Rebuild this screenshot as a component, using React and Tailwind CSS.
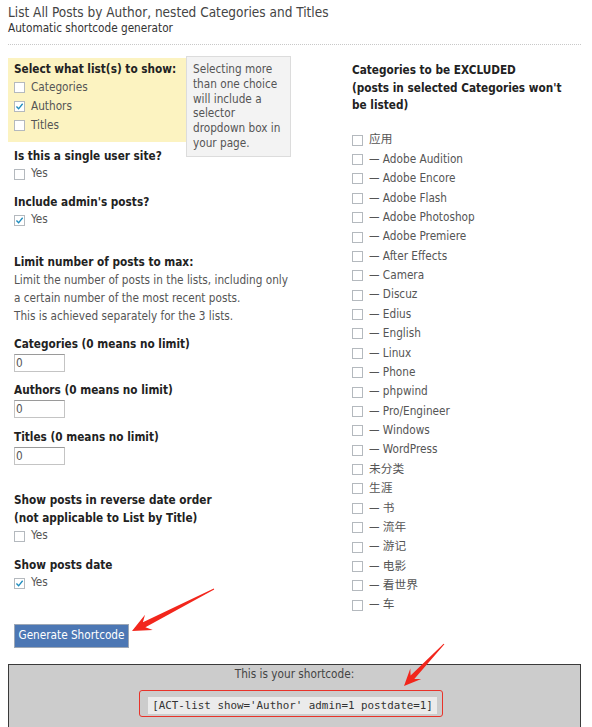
const categories = [
  '应用',
  '— Adobe Audition',
  '— Adobe Encore',
  '— Adobe Flash',
  '— Adobe Photoshop',
  '— Adobe Premiere',
  '— After Effects',
  '— Camera',
  '— Discuz',
  '— Edius',
  '— English',
  '— Linux',
  '— Phone',
  '— phpwind',
  '— Pro/Engineer',
  '— Windows',
  '— WordPress',
  '未分类',
  '生涯',
  '— 书',
  '— 流年',
  '— 游记',
  '— 电影',
  '— 看世界',
  '— 车',
]

function Box({ checked }) {
  return (
    <span className="inline-flex h-[11px] w-[11px] shrink-0 items-center justify-center border border-[#b4b9be] bg-white">
      {checked && (
        <svg viewBox="0 0 10 10" className="h-[9px] w-[9px]">
          <path d="M1.6 5.1 L4 7.6 L8.5 1.9" fill="none" stroke="#1e8cbe" strokeWidth="1.5" />
        </svg>
      )}
    </span>
  )
}

function Check({ label, checked, className = 'h-[19px]' }) {
  return (
    <div className={`flex items-center gap-[6px] ${className}`}>
      <Box checked={checked} />
      <span>{label}</span>
    </div>
  )
}

function NumberField() {
  return (
    <input
      readOnly
      value="0"
      className="mt-[1px] block h-[18px] w-[51px] border border-[#c4c4c4] border-t-[#9a9a9a] bg-white pl-[1px] text-[11.7px] text-[#555] outline-none"
    />
  )
}

// tapered shaft + swept head, pointing from tail to tip
function arrowPoints(tx, ty, hx, hy, headLen, headHalf, tailW, neckW) {
  const dx = hx - tx
  const dy = hy - ty
  const len = Math.sqrt(dx * dx + dy * dy)
  const ux = dx / len
  const uy = dy / len
  const nx = -uy
  const ny = ux
  const bx = hx - ux * headLen
  const by = hy - uy * headLen
  const kx = hx - ux * headLen * 0.72
  const ky = hy - uy * headLen * 0.72
  const pts = [
    [tx + nx * tailW / 2, ty + ny * tailW / 2],
    [kx + nx * neckW / 2, ky + ny * neckW / 2],
    [bx + nx * headHalf, by + ny * headHalf],
    [hx, hy],
    [bx - nx * headHalf, by - ny * headHalf],
    [kx - nx * neckW / 2, ky - ny * neckW / 2],
    [tx - nx * tailW / 2, ty - ny * tailW / 2],
  ]
  return pts.map(p => p.map(v => v.toFixed(1)).join(',')).join(' ')
}

export default function App() {
  return (
    <div className="relative min-h-[727px] bg-white px-2 pt-[3px] font-['DejaVu_Sans_Condensed','Noto_Sans_CJK_SC',sans-serif] text-[11.7px] text-[#555]">
      {/* header */}
      <div className="w-[573px] border-b border-dotted border-[#c8c8c8] pb-[9px] text-[#444]">
        <div className="text-[13.5px] leading-[18px]">List All Posts by Author, nested Categories and Titles</div>
        <div className="leading-[14px] text-[#333]">Automatic shortcode generator</div>
      </div>

      <div className="flex">
        {/* left column */}
        <div className="w-[283px] pt-[13px]">
          <div className="float-right -mt-[2px] h-[101px] w-[105px] border border-[#dcdcdc] bg-[#f3f3f3] pl-[6px] pt-[5px] leading-[14.8px] whitespace-nowrap">
            Selecting more<br />than one choice<br />will include a<br />selector<br />dropdown box in<br />your page.
          </div>

          <div className="w-[178px] bg-[#fcf3c1] pb-[7px] pl-[6px] pt-[2px]">
            <div className="font-bold leading-[18px] text-[#222]">Select what list(s) to show:</div>
            <Check label="Categories" />
            <Check label="Authors" checked />
            <Check label="Titles" />
          </div>

          <div className="pl-[6px]">
            <div className="mt-[5px] font-bold leading-[18px] text-[#222]">Is this a single user site?</div>
            <Check label="Yes" className="h-[18px]" />

            <div className="mt-[10px] font-bold leading-[18px] text-[#222]">Include admin's posts?</div>
            <Check label="Yes" checked className="h-[18px]" />

            <div className="mt-[24px] font-bold leading-[18px] text-[#222]">Limit number of posts to max:</div>
            <div className="leading-[18px] whitespace-nowrap">
              Limit the number of posts in the lists, including only<br />
              a certain number of the most recent posts.<br />
              This is achieved separately for the 3 lists.
            </div>

            <div className="mt-[10px] font-bold leading-[18px] text-[#222]">Categories (0 means no limit)</div>
            <NumberField />
            <div className="mt-[9px] font-bold leading-[18px] text-[#222]">Authors (0 means no limit)</div>
            <NumberField />
            <div className="mt-[10px] font-bold leading-[18px] text-[#222]">Titles (0 means no limit)</div>
            <NumberField />

            <div className="mt-[26px] font-bold leading-[18px] text-[#222]">
              Show posts in reverse date order<br />(not applicable to List by Title)
            </div>
            <Check label="Yes" className="h-[18px]" />

            <div className="mt-[11px] font-bold leading-[18px] text-[#222]">Show posts date</div>
            <Check label="Yes" checked className="h-[18px]" />

            <button className="mt-[32px] flex h-[24px] w-[115px] items-center justify-center border border-[#9da7b5] bg-[#4c77b4] text-[11.7px] text-white">
              Generate Shortcode
            </button>
          </div>
        </div>

        {/* right column */}
        <div className="ml-[61px] pt-[17px]">
          <div className="font-bold leading-[17.5px] text-[#222]">
            Categories to be EXCLUDED<br />(posts in selected Categories won't<br />be listed)
          </div>
          <div className="mt-[16px]">
            {categories.map(c => (
              <Check key={c} label={c} className="h-[19.375px]" />
            ))}
          </div>
        </div>
      </div>

      {/* result */}
      <div className="mt-[16px] h-[80px] w-[573px] border border-[#3a3a3a] bg-[#cccccc]">
        <div className="text-center leading-[18px] text-[#444]">This is your shortcode:</div>
        <div className="mt-[7px] flex justify-center">
          <div className="mr-[7px] rounded-[3px] border border-[#e8332a] pb-[2px] pl-[8px] pr-[5px] pt-[6px]">
            <div className="h-[17px] bg-[#ebebeb] px-[4px] font-['DejaVu_Sans_Mono',monospace] text-[10.85px] leading-[17px] text-[#333]">
              [ACT-list show='Author' admin=1 postdate=1]
            </div>
          </div>
        </div>
      </div>

      {/* annotation arrows */}
      <svg className="pointer-events-none absolute left-0 top-0 h-[727px] w-[592px]" viewBox="0 0 592 727">
        <polygon points={arrowPoints(214, 589, 132, 631, 19, 8.5, 1, 5.5)} fill="#f2261c" />
        <polygon points={arrowPoints(444, 644, 404, 686, 17, 7.5, 1, 5)} fill="#f2261c" />
      </svg>
    </div>
  )
}
